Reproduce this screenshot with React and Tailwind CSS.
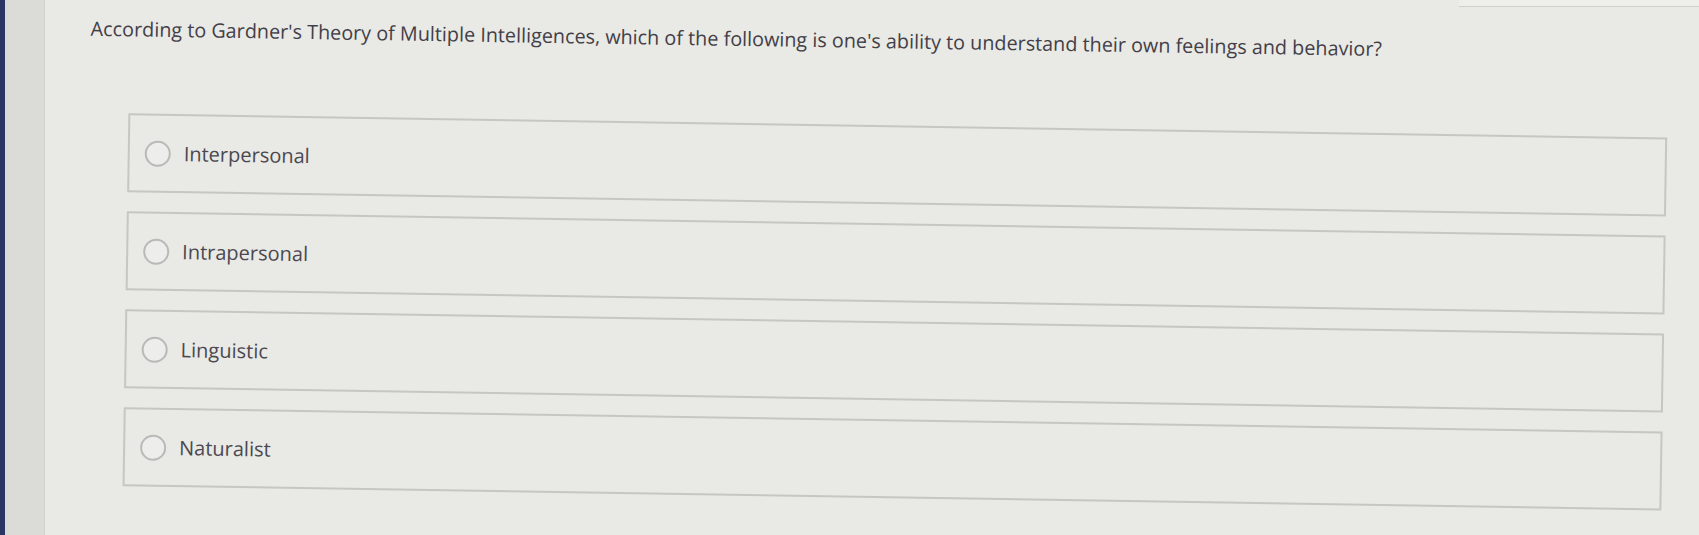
const OPTIONS = ['Interpersonal', 'Intrapersonal', 'Linguistic', 'Naturalist'];

function Option({ label }) {
  return (
    <label className="flex h-[79px] w-[1539px] items-center border-2 border-[#c6c6c3] pl-[15px]">
      <span className="h-[26px] w-[26px] shrink-0 rounded-full border-2 border-[#b9b9b7] bg-[#ededeb]" />
      <span className="ml-[13px] text-[20px] leading-[27px] text-[#4b4850]">{label}</span>
    </label>
  );
}

export default function App() {
  return (
    <div
      className="flex h-[535px] w-[1699px] overflow-hidden bg-[#e9e9e5]"
      style={{ fontFamily: '"Open Sans", "Liberation Sans", sans-serif' }}
    >
      {/* screen bezel + sidebar strip */}
      <div className="w-[5px] shrink-0 bg-[#2a3763]" />
      <div className="w-[40px] shrink-0 border-r border-[#d2d2ce] bg-[#dbdbd7]" />

      <div className="flex flex-1 flex-col">
        {/* faint header edge, top right */}
        <div className="flex h-[7px] shrink-0 justify-end">
          <div className="h-[7px] w-[240px] border-b border-[#cfcfcb] bg-[#eeeeea]" />
        </div>

        {/* question body, photo is tilted slightly */}
        <div className="flex flex-1 rotate-[0.9deg] flex-col pl-[42px]">
          <p className="mt-[20px] text-[19.8px] leading-[27px] text-[#433f48]">
            According to Gardner's Theory of Multiple Intelligences, which of the following is one's ability to understand their own feelings and behavior?
          </p>
          <div className="ml-[39px] mt-[71px] flex flex-col gap-[19px]">
            {OPTIONS.map((o) => (
              <Option key={o} label={o} />
            ))}
          </div>
        </div>
      </div>
    </div>
  );
}
